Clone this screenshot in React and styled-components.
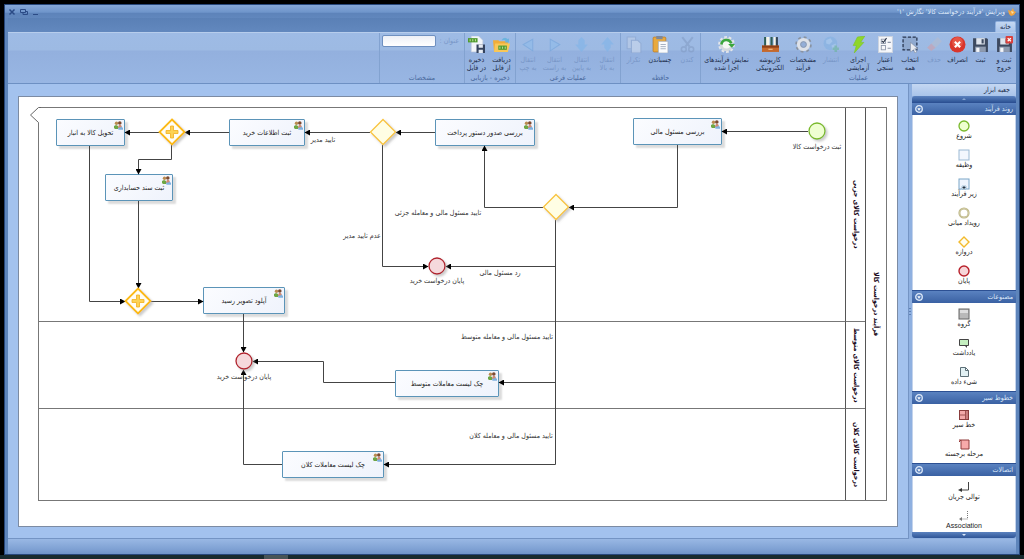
import React from 'react'
import styled, { createGlobalStyle, css } from 'styled-components'

const GlobalStyle = createGlobalStyle`
  * { box-sizing: border-box; }
  body {
    margin: 0;
    background: #000;
    font-family: "DejaVu Sans Condensed", "DejaVu Sans", sans-serif;
    font-size: 7px;
    line-height: 8px;
    color: #1c2c4a;
  }
  button, input {
    font: inherit;
    color: inherit;
    margin: 0;
    padding: 0;
    border: 0;
    background: none;
  }
  svg { display: block; flex-shrink: 0; }
`

const Page = styled.div`
  min-height: 100vh;
  display: flex;
  flex-direction: column;
  padding-top: 4px;
`

const AppWindow = styled.div`
  flex: 1;
  margin: 0 4px;
  display: flex;
  flex-direction: column;
  border: 1px solid #27477b;
  padding: 0 3px;
  background: #5e85bb;
`

const TitleBar = styled.header`
  direction: rtl;
  height: 13px;
  margin: 0 -3px;
  padding: 0 3px;
  display: flex;
  align-items: center;
  justify-content: space-between;
  background: linear-gradient(#86a8d8 0%, #6f95cb 55%, #5d83ba 65%, #6187bd 100%);
`

const Title = styled.h1`
  margin: 0;
  display: flex;
  align-items: center;
  gap: 3px;
  font-size: 7px;
  font-weight: normal;
  color: #dfeafa;
`

const WindowButtons = styled.div`
  direction: ltr;
  display: flex;
  gap: 4px;
`

const WindowButton = styled.button`
  width: 8px;
  height: 8px;
  color: #2b4b86;
`

const TabBar = styled.nav`
  direction: rtl;
  height: 14px;
  display: flex;
  align-items: flex-end;
  background: linear-gradient(#5a80b6, #6288be);
`

const Tab = styled.button`
  width: 21px;
  height: 11px;
  background: linear-gradient(#c3d7f2, #a9c4ea);
  border: 1px solid #8fb0df;
  border-bottom: 0;
  border-radius: 2px 2px 0 0;
`

const Ribbon = styled.div`
  direction: rtl;
  height: 52px;
  display: flex;
  border-top: 1px solid #b7cdec;
  border-bottom: 1px solid #6d90c3;
  background: linear-gradient(#9ebbe5 0%, #9dbae3 34%, #93b0de 36%, #98b6e3 100%);
`

const Group = styled.section`
  display: flex;
  flex-direction: column;
  border-left: 1px solid #82a2d0;
  flex-shrink: 0;
`

const GroupTitle = styled.h2`
  margin: 0;
  font-size: 7px;
  line-height: 9px;
  font-weight: normal;
  text-align: center;
  color: #48689c;
`

const GroupBody = styled.div`
  flex: 1;
  display: flex;
`

const Tool = styled.button`
  width: ${p => p.$w}px;
  display: flex;
  flex-direction: column;
  align-items: center;
  gap: 3px;
  padding-top: 3px;
  white-space: nowrap;
  ${p => p.disabled && css`
    color: #7896c7;
    svg { opacity: 0.5; }
  `}
`

const ToolText = styled.span`
  display: flex;
  flex-direction: column;
  align-items: center;
`

const Field = styled.label`
  width: 84px;
  display: flex;
  align-items: flex-start;
  gap: 4px;
  padding: 2px 5px 0 2px;
  color: #7896c7;
  line-height: 12px;
  white-space: nowrap;
`

const TextBox = styled.input`
  flex: 1;
  min-width: 0;
  height: 12px;
  border: 1px solid #6f90c0;
  border-radius: 2px;
  background: linear-gradient(#eceff6, #fff);
`

const Workspace = styled.main`
  flex: 1;
  display: flex;
  background: #8fb0e0;
`

const CanvasArea = styled.div`
  flex: 1;
  min-width: 0;
  display: flex;
  padding: 12px 10px 11px 10px;
  background: #a3c2ee;
  border-right: 1px solid #7494c4;
  border-bottom: 1px solid #7494c4;
`

const Canvas = styled.div`
  position: relative;
  flex: 1;
  overflow: hidden;
  background: #fff;
  border: 1px solid #7c8ba3;
`

const Splitter = styled.div`
  width: 3px;
  display: flex;
  align-items: center;
  &::after {
    content: "";
    width: 2px;
    height: 8px;
    background: repeating-linear-gradient(#5d80b5 0 1px, transparent 1px 3px);
  }
`

const Toolbox = styled.aside`
  direction: rtl;
  width: 104px;
  display: flex;
  flex-direction: column;
`

const ToolboxTitle = styled.h2`
  margin: 0;
  height: 12px;
  padding: 0 6px;
  font-size: 7px;
  line-height: 12px;
  font-weight: normal;
  background: linear-gradient(#c4d7f2, #a9c4ea);
`

const ScrollBar = styled.button`
  height: 6px;
  display: flex;
  align-items: center;
  justify-content: center;
  background: linear-gradient(#5b82bf, #2f5597);
  border-radius: ${p => (p.$bottom ? '0 0 3px 3px' : '3px 3px 0 0')};
`

const SectionHead = styled.button`
  width: 100%;
  height: 13px;
  padding: 0 3px;
  display: flex;
  align-items: center;
  justify-content: space-between;
  color: #dfeafa;
  border-top: 1px solid #2c5093;
  background: linear-gradient(#5a82c0, #3a61a3);
`

const SectionBody = styled.div`
  height: ${p => p.$h}px;
  flex-shrink: 0;
  padding-top: 5px;
  background: #fff;
  border: 1px solid #c3d3ec;
  border-width: 0 1px;
  display: flex;
  flex-direction: column;
  overflow: hidden;
`

const PaletteItem = styled.button`
  height: 29px;
  flex-shrink: 0;
  display: flex;
  flex-direction: column;
  align-items: center;
  font-family: "Liberation Sans", "DejaVu Sans Condensed", "DejaVu Sans", sans-serif;
  color: #222;
`

const StatusBar = styled.footer`
  height: 15px;
  background: linear-gradient(#99b8e4, #80a2d4 65%, #6f93c8);
`

const TaskBar = styled.div`
  height: 4px;
  display: flex;
  padding-left: 264px;
  background: #182a2e;
  &::before {
    content: "";
    width: 24px;
    background: #485457;
  }
`

const Pool = styled.div`
  position: absolute;
  left: 19px;
  top: 10px;
  width: 849px;
  height: 394px;
  display: grid;
  grid-template-columns: 1fr 20px 21px;
  grid-template-rows: 214px 87px 1fr;
  border: 1px solid #777;
  color: #1b0a1c;
  font-weight: bold;
`

const LaneBody = styled.div`
  border-bottom: ${p => (p.$last ? 0 : 1)}px solid #777;
`

const LaneTitle = styled.div`
  writing-mode: vertical-rl;
  direction: rtl;
  display: flex;
  align-items: center;
  justify-content: center;
  white-space: nowrap;
  border-left: 1px solid #555;
  border-bottom: ${p => (p.$last ? 0 : 1)}px solid #777;
`

const PoolTitle = styled(LaneTitle)`
  grid-column: 3;
  grid-row: 1 / 4;
  border-bottom: 0;
`

const Wires = styled.svg`
  position: absolute;
  left: 0;
  top: 0;
`

const Task = styled.div`
  position: absolute;
  left: ${p => p.$x}px;
  top: ${p => p.$y}px;
  width: ${p => p.$w}px;
  height: 27px;
  display: flex;
  align-items: center;
  justify-content: center;
  direction: rtl;
  white-space: nowrap;
  color: #222;
  background: linear-gradient(135deg, #fbfcff, #eff3fc);
  border: 1px solid #5b94b8;
  border-radius: 1px;
  box-shadow: 3px 3px 2px #dcdcdc;
`

const TaskBadge = styled.span`
  position: absolute;
  right: 1px;
  top: 1px;
`

const Caption = styled.span`
  position: absolute;
  left: ${p => p.$x - 70}px;
  top: ${p => p.$y - 4}px;
  width: 140px;
  text-align: center;
  direction: rtl;
  color: #333;
`

// ribbon icons, all on a 16x16 grid
const Floppy = () => (
  <>
    <path d="M1 2h13l1 1v12H1z" fill="#3d4a60" />
    <path d="M4 2h8v6H4z" fill="#dfe5ee" />
    <path d="M9 3h2v4H9z" fill="#3d4a60" />
    <path d="M3 10h10v5H3z" fill="#8e9bb0" />
    <path d="M4 11h3v4H4z" fill="#f3f5f9" />
  </>
)

const icons = {
  saveExit: <><Floppy /><rect x="9" y="0" width="7" height="7" rx="1" fill="#d9403c" /><path d="M11 2l3 3M14 2l-3 3" stroke="#fff" strokeWidth="1.2" /></>,
  save: <Floppy />,
  cancel: <><circle cx="8" cy="8" r="7.5" fill="#d9362c" /><circle cx="8" cy="6" r="5" fill="#ec6a58" opacity=".6" /><path d="M5.5 5.5l5 5M10.5 5.5l-5 5" stroke="#fff" strokeWidth="2" /></>,
  erase: <><path d="M11 1l4 4-6 6-4-4z" fill="#b8bccb" /><path d="M5 7l4 4-4 3-4-3z" fill="#d99a9f" /></>,
  selectAll: <><rect x="1" y="1" width="13" height="12" fill="#8fa9cf" stroke="#27344f" strokeWidth="1.2" strokeDasharray="3 1.5" /><path d="M8 6l7 6h-3l2 3-2 1-1-3-3 2z" fill="#e8ebf1" stroke="#7a869b" strokeWidth=".5" /></>,
  validate: <><rect x="1.5" y=".5" width="13" height="15" fill="#f7f8fb" stroke="#cdd4e0" /><rect x="4" y="3" width="4" height="4" fill="none" stroke="#8a94a6" strokeWidth=".8" /><rect x="4" y="9" width="4" height="4" fill="none" stroke="#8a94a6" strokeWidth=".8" /><path d="M4.5 4.5l1.5 1.5 3-4" fill="none" stroke="#2b3547" /><path d="M10 6h3M10 11.5h3" stroke="#8a94a6" /></>,
  run: <path d="M7 1l7-1-4 6h3L4 16l2-7H3z" fill="#8fd62a" stroke="#7cc526" strokeWidth=".6" />,
  publish: <><circle cx="7" cy="7" r="6.5" fill="#7fb0e2" /><path d="M3 4l4-2 2 3-3 3-3-1zM8 9l4-2v3l-3 3z" fill="#a9cdf0" /><path d="M12 9v6M9 12h6" stroke="#62b58d" strokeWidth="2.5" /></>,
  gear: <><circle cx="8" cy="8" r="6.6" fill="none" stroke="#8993a2" strokeWidth="2.4" strokeDasharray="2.6 2.58" /><circle cx="8" cy="8" r="4.6" fill="none" stroke="#dde1e8" strokeWidth="3.2" /><circle cx="8" cy="8" r="2.7" fill="#93aed8" stroke="#8993a2" strokeWidth=".7" /></>,
  files: <><path d="M2 1h2v9H2zM8 1h2v9H8z" fill="#2c5c55" /><path d="M4 1h3v9H4zM11 1h2v9h-2z" fill="#f5f5e8" /><path d="M13 1h2v9h-2z" fill="#345" /><path d="M0 9h16v6H0z" fill="#c5692d" /><path d="M0 9h16v2H0z" fill="#8f4018" /><path d="M6 12h4v1H6z" fill="#f3c391" /></>,
  executed: <><circle cx="8" cy="8" r="6.9" fill="none" stroke="#e3e6ea" strokeWidth="2" strokeDasharray="2.6 1.7" /><circle cx="8" cy="8" r="5" fill="#f5f8f3" stroke="#d4d9dd" strokeWidth="2.5" /><path d="M3.2 8A4.8 4.8 0 0 1 12.5 7" fill="none" stroke="#3ba63d" strokeWidth="2.4" /><path d="M9.5 7.500H16L13 11z" fill="#3ba63d" /></>,
  cut: <><path d="M3 1l7 9M13 1L6 10" stroke="#7f98c0" strokeWidth="2" /><circle cx="4.5" cy="12.5" r="2.3" fill="none" stroke="#7f98c0" strokeWidth="1.5" /><circle cx="11.5" cy="12.5" r="2.3" fill="none" stroke="#7f98c0" strokeWidth="1.5" /></>,
  paste: <><rect x="1" y="1" width="12" height="14" rx="1" fill="#e9a93c" stroke="#b8792a" strokeWidth=".7" /><rect x="4" y="0" width="6" height="3" fill="#7d889b" /><path d="M6 5h9v11H6z" fill="#fafbfd" stroke="#9ba7bb" strokeWidth=".6" /><path d="M8 8h5M8 10h5M8 12h5" stroke="#9aa5b8" strokeWidth=".8" /></>,
  copy: <><path d="M2 1h8v11H2z" fill="#c6d3e8" stroke="#88a0c8" /><path d="M6 4h6l3 3v9H6z" fill="#d7e1f0" stroke="#88a0c8" /></>,
  up: <path d="M8 1l6 7h-3v3l-3 4-3-4V8H2z" fill="#7ab4ea" />,
  down: <path d="M8 15L2 8h3V4l3-3 3 3v4h3z" fill="#7ab4ea" />,
  right: <path d="M4 3l9 5-9 6z" fill="#8cbcec" stroke="#6aa0da" />,
  left: <path d="M12 3L3 8l9 6z" fill="#8cbcec" stroke="#6aa0da" />,
  load: <><path d="M0 4h5l1 1h8v10H1z" fill="#f0ad38" /><path d="M8 4c2-3 4-3 6-1l1-1v4h-4l1-1c-1-2-3-1-4-1z" fill="#6bb4de" /><path d="M2 7h14l-2 8H1z" fill="#f9c758" /><path d="M5 9h8v4H5z" fill="#4f9a2e" /><path d="M6.5 10v2M9 10v2M11.5 10v2" stroke="#d6efb5" strokeWidth=".8" /></>,
  store: <><path d="M3 0h7l4 4v11H3z" fill="#f2f5fa" stroke="#b7c3d6" strokeWidth=".6" /><path d="M0 2h9v4H0z" fill="#4f9a2e" /><path d="M2 3v2M4.5 3v2M7 3v2" stroke="#d6efb5" strokeWidth=".8" /><path d="M8 8h8v8H8z" fill="#34435e" /><path d="M10 8h4v3h-4zM10 13h4v3h-4z" fill="#e5eaf2" /></>,
}

const ribbonGroups = [
  {
    title: 'عملیات',
    tools: [
      { icon: 'saveExit', w: 24, text: ['ثبت و', 'خروج'] },
      { icon: 'save', w: 23, text: ['ثبت'] },
      { icon: 'cancel', w: 23, text: ['انصراف'] },
      { icon: 'erase', w: 24, text: ['حذف'], disabled: true },
      { icon: 'selectAll', w: 24, text: ['انتخاب', 'همه'] },
      { icon: 'validate', w: 26, text: ['اعتبار', 'سنجی'] },
      { icon: 'run', w: 28, text: ['اجرای', 'آزمایشی'] },
      { icon: 'publish', w: 26, text: ['انتشار'], disabled: true },
      { icon: 'gear', w: 30, text: ['مشخصات', 'فرآیند'] },
      { icon: 'files', w: 36, text: ['کارپوشه', 'الکترونیکی'] },
      { icon: 'executed', w: 51, text: ['نمایش فرآیندهای', 'اجرا شده'] },
    ],
  },
  {
    title: 'حافظه',
    tools: [
      { icon: 'cut', w: 26, text: ['کندن'], disabled: true },
      { icon: 'paste', w: 28, text: ['چسباندن'] },
      { icon: 'copy', w: 25, text: ['تکرار'], disabled: true },
    ],
  },
  {
    title: 'عملیات فرعی',
    tools: [
      { icon: 'up', w: 26, text: ['انتقال', 'به بالا'], disabled: true },
      { icon: 'down', w: 25, text: ['انتقال', 'به پایین'], disabled: true },
      { icon: 'right', w: 29, text: ['انتقال', 'به راست'], disabled: true },
      { icon: 'left', w: 24, text: ['انتقال', 'به چپ'], disabled: true },
    ],
  },
  {
    title: 'ذخیره - بازیابی',
    tools: [
      { icon: 'load', w: 27, text: ['دریافت', 'از فایل'] },
      { icon: 'store', w: 23, text: ['ذخیره', 'در فایل'] },
    ],
  },
]

const sections = [
  {
    title: 'روند فرآیند',
    h: 175,
    items: [
      ['شروع', <circle cx="6" cy="6" r="5" fill="#efffd0" stroke="#79b92c" strokeWidth="1.3" />],
      ['وظیفه', <rect x="1" y="1" width="10" height="10" fill="#f3f7fe" stroke="#9bb9d4" />],
      ['زیر فرآیند', <><rect x="1" y="1" width="10" height="10" fill="#eef4fd" stroke="#7aa6c8" /><path d="M4 8h4v3H4z" fill="#fff" stroke="#7aa6c8" strokeWidth=".6" /><path d="M6 8v3M4.5 9.5h3" stroke="#234" /></>],
      ['رویداد میانی', <><circle cx="6" cy="6" r="4.6" fill="#fff" stroke="#b9b284" strokeWidth="2" /><circle cx="6" cy="6" r="4.6" fill="none" stroke="#dcd6ae" strokeWidth=".6" /></>],
      ['دروازه', <path d="M6 1l5 5-5 5-5-5z" fill="#fffef0" stroke="#f3ba2b" strokeWidth="1.4" />],
      ['پایان', <circle cx="6" cy="6" r="5" fill="#f6d6d9" stroke="#b8212b" strokeWidth="1.4" />],
    ],
  },
  {
    title: 'مصنوعات',
    h: 88,
    items: [
      ['گروه', <><rect x="1" y="1" width="10" height="10" fill="#b9b9b9" stroke="#666" /><path d="M2 2h8v3H2z" fill="#dedede" /></>],
      ['یادداشت', <><path d="M1.5 2.5h9v6h-9z" fill="#c5efc0" stroke="#444" /><path d="M7 9l2 2V9z" fill="#444" /></>],
      ['شیء داده', <path d="M2.5 1.5h5l3 3v6h-8zM7.5 1.5v3h3" fill="#e2f1f4" stroke="#5d7078" />],
    ],
  },
  {
    title: 'خطوط سیر',
    h: 59,
    items: [
      ['خط سیر', <><rect x="1.5" y="1.5" width="9" height="9" fill="#f3a9a9" stroke="#8a3c3c" /><path d="M1 6h6M7.5 1v10M9 1v10" stroke="#8a3c3c" strokeWidth=".8" /></>],
      ['مرحله برجسته', <path d="M1 2h2v9h8V2H3L1 4" fill="#f8aaaa" stroke="#903a3a" />],
    ],
  },
  {
    title: 'اتصالات',
    h: 56,
    items: [
      ['توالی جریان', <><path d="M10.5 1v8H3" fill="none" stroke="#444" /><path d="M0 9l4-2v4z" fill="#333" /></>],
      ['Association', <><path d="M9.5 1v8H3" fill="none" stroke="#777" strokeDasharray="1 1" /><path d="M1 9l3-2v4z" fill="#777" /></>],
    ],
  },
]

const tasks = [
  { x: 37, y: 22, w: 69, text: 'تحویل کالا به انبار' },
  { x: 210, y: 22, w: 76, text: 'ثبت اطلاعات خرید' },
  { x: 86, y: 77, w: 68, text: 'ثبت سند حسابداری' },
  { x: 184, y: 190, w: 82, text: 'آپلود تصویر رسید' },
  { x: 416, y: 22, w: 100, text: 'بررسی صدور دستور پرداخت' },
  { x: 614, y: 21, w: 89, text: 'بررسی مسئول مالی' },
  { x: 376, y: 273, w: 104, text: 'چک لیست معاملات متوسط' },
  { x: 263, y: 354, w: 102, text: 'چک لیست معاملات کلان' },
]

const captions = [
  [798, 50, 'ثبت درخواست کالا'],
  [304, 43, 'تایید مدیر'],
  [419, 116, 'تایید مسئول مالی و معامله جزئی'],
  [343, 139, 'عدم تایید مدیر'],
  [418, 184, 'پایان درخواست خرید'],
  [481, 176, 'رد مسئول مالی'],
  [488, 240, 'تایید مسئول مالی و معامله متوسط'],
  [492, 339, 'تایید مسئول مالی و معامله کلان'],
  [225, 280, 'پایان درخواست خرید'],
]

const flows = [
  'M789 34.5H703',
  'M658.5 48V110.5H550',
  'M524 110.5H465.5V49',
  'M536.5 123V367.5H365',
  'M536.5 169.5H427',
  'M536.5 285.5H480',
  'M416 35.5H377',
  'M351 35.5H286',
  'M363.5 48V169.5H409',
  'M210 35.5H166',
  'M140 35.5H106',
  'M152.5 48V62.5H119.5V77',
  'M70.5 49V204.5H106',
  'M119.5 104V191',
  'M132 204.5H184',
  'M224.5 217V255',
  'M376 285.5H304.5V264.5H234',
  'M263 367.5H224.5V273',
]

const gateways = [[153, 35, true], [119, 204, true], [364, 35], [537, 110]]
const events = [
  [798, 34, '#79b92c', '#efffd2'],
  [418, 169, '#b0242e', '#f5d9dc'],
  [225, 264, '#b0242e', '#f5d9dc'],
]

const Users = () => (
  <svg width="9" height="9" viewBox="0 0 9 9">
    <circle cx="2.5" cy="2.2" r="1.7" fill="#b98b50" />
    <circle cx="5.8" cy="2" r="1.8" fill="#7d4a30" />
    <path d="M0 7V5l2-1 2 1v3H1z" fill="#6ea644" />
    <path d="M4 6l1-2h2l1 2v1H4z" fill="#cf8b74" />
    <path d="M4 7.200l1-1 1 .5L7.500 5.500 9 7v1.800H4.500z" fill="#80b1de" />
  </svg>
)

const RibbonTool = ({ icon, w, text, disabled }) => (
  <Tool type="button" $w={w} disabled={disabled}>
    <svg width="17" height="17" viewBox="0 0 16 16">{icons[icon]}</svg>
    <ToolText>{text.map(t => <span key={t}>{t}</span>)}</ToolText>
  </Tool>
)

const Diagram = () => (
  <Canvas>
    <Pool>
      <LaneBody />
      <LaneTitle>درخواست کالای جزیی</LaneTitle>
      <LaneBody />
      <LaneTitle>درخواست کالای متوسط</LaneTitle>
      <LaneBody $last />
      <LaneTitle $last>درخواست کالای کلان</LaneTitle>
      <PoolTitle>فرآیند درخواست کالا</PoolTitle>
    </Pool>
    {tasks.map(t => (
      <Task key={t.text} $x={t.x} $y={t.y} $w={t.w}>
        {t.text}
        <TaskBadge><Users /></TaskBadge>
      </Task>
    ))}
    <Wires width="878" height="430">
      <defs>
        <marker id="arrow" markerUnits="userSpaceOnUse" markerWidth="6" markerHeight="6" refX="5" refY="3" orient="auto">
          <path d="M0 0l5.5 3L0 6z" fill="#000" />
        </marker>
        <filter id="shadow" x="-30%" y="-30%" width="180%" height="180%">
          <feDropShadow dx="2" dy="2" stdDeviation="1" floodColor="#999" floodOpacity=".5" />
        </filter>
      </defs>
      <path d="M22 9.500h-2.500l-8 8 8 8H22z" fill="#fff" />
      <path d="M22 10.500h-2.500l-8 7.500 8 7.500" fill="none" stroke="#666" />
      {flows.map(d => <path key={d} d={d} fill="none" stroke="#444" markerEnd="url(#arrow)" />)}
      {gateways.map(([x, y, plus]) => (
        <g key={x} transform={`translate(${x} ${y})`}>
          <path d="M0-12.500L12.500 0 0 12.500-12.500 0z" fill={plus ? '#fffdf5' : '#fffee4'} stroke={plus ? '#fcb913' : '#f8c440'} strokeWidth={plus ? 1.8 : 1.3} filter="url(#shadow)" />
          {plus && <path d="M-1.500-6h3v4.500H6v3H1.500V6h-3V1.500H-6v-3h4.500z" fill="#fcd254" stroke="#f4b01c" strokeWidth=".8" />}
        </g>
      ))}
      {events.map(([x, y, line, fill]) => (
        <circle key={x} cx={x} cy={y} r="8" fill={fill} stroke={line} strokeWidth="1.3" filter="url(#shadow)" />
      ))}
    </Wires>
    {captions.map(([x, y, text]) => <Caption key={x} $x={x} $y={y}>{text}</Caption>)}
  </Canvas>
)

const App = () => {
  return (
    <Page>
      <GlobalStyle />
      <AppWindow>
        <TitleBar>
          <Title>
            <svg width="8" height="8" viewBox="0 0 8 8">
              <path d="M0 2l3 1 2-3 1 3 2 1-2 3-3 1-2-2z" fill="#f0a440" />
              <path d="M3 3l3 1-2 2z" fill="#fbe2a5" />
            </svg>
            ویرایش 'فرآیند درخواست کالا' نگارش '۱'
          </Title>
          <WindowButtons>
            <WindowButton type="button" aria-label="بستن">
              <svg width="8" height="8" viewBox="0 0 8 8"><path d="M1.5 1.5l5 5M6.5 1.5l-5 5" stroke="currentColor" strokeWidth="1.5" /></svg>
            </WindowButton>
            <WindowButton type="button" aria-label="بازگردانی">
              <svg width="8" height="8" viewBox="0 0 8 8"><path d="M.5 1.5h5v3h-5zM3 4.5v2h4.500v-3h-2" fill="none" stroke="currentColor" /></svg>
            </WindowButton>
            <WindowButton type="button" aria-label="کوچک کردن">
              <svg width="8" height="8" viewBox="0 0 8 8"><path d="M1 6.5h5" stroke="currentColor" /></svg>
            </WindowButton>
          </WindowButtons>
        </TitleBar>
        <TabBar><Tab type="button">خانه</Tab></TabBar>
        <Ribbon>
          {ribbonGroups.map(g => (
            <Group key={g.title}>
              <GroupBody>{g.tools.map(t => <RibbonTool key={t.icon} {...t} />)}</GroupBody>
              <GroupTitle>{g.title}</GroupTitle>
            </Group>
          ))}
          <Group>
            <GroupBody>
              <Field htmlFor="name">عنوان :<TextBox id="name" type="text" /></Field>
            </GroupBody>
            <GroupTitle>مشخصات</GroupTitle>
          </Group>
        </Ribbon>
        <Workspace>
          <CanvasArea><Diagram /></CanvasArea>
          <Splitter />
          <Toolbox>
            <ToolboxTitle>جعبه ابزار</ToolboxTitle>
            <ScrollBar type="button" aria-label="بالا">
              <svg width="4" height="2" viewBox="0 0 4 2"><path d="M0 2l2-2 2 2z" fill="#86a4d2" /></svg>
            </ScrollBar>
            {sections.map(s => (
              <React.Fragment key={s.title}>
                <SectionHead type="button">
                  {s.title}
                  <svg width="8" height="8" viewBox="0 0 8 8">
                    <circle cx="4" cy="4" r="3.3" fill="#5c82bd" stroke="#dbe7f8" strokeWidth="1.3" />
                    <path d="M2.3 3.3h3.4L4 5.8z" fill="#fff" />
                  </svg>
                </SectionHead>
                <SectionBody $h={s.h}>
                  {s.items.map(([name, shape]) => (
                    <PaletteItem type="button" key={name}>
                      <svg width="12" height="12" viewBox="0 0 12 12">{shape}</svg>
                      {name}
                    </PaletteItem>
                  ))}
                </SectionBody>
              </React.Fragment>
            ))}
            <ScrollBar type="button" aria-label="پایین" $bottom>
              <svg width="4" height="2" viewBox="0 0 4 2"><path d="M0 0h4L2 2z" fill="#dbe7f8" /></svg>
            </ScrollBar>
          </Toolbox>
        </Workspace>
        <StatusBar />
      </AppWindow>
      <TaskBar />
    </Page>
  )
}

export default App
